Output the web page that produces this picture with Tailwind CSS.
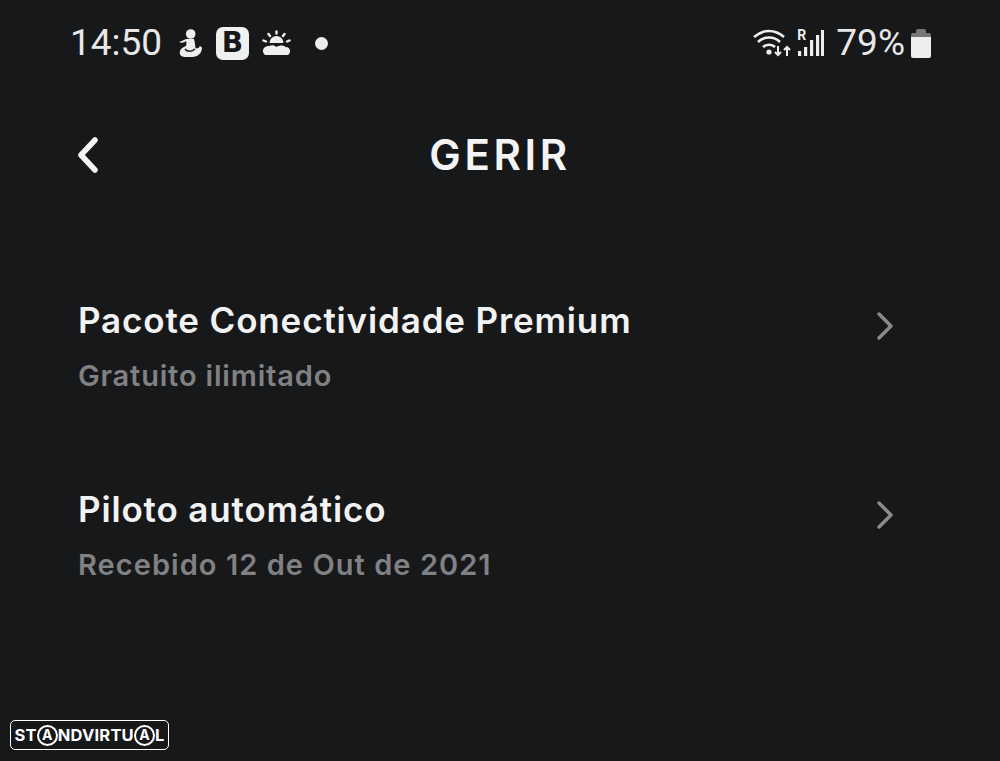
<!DOCTYPE html>
<html><head><meta charset="utf-8"><script src="https://cdn.jsdelivr.net/npm/@tailwindcss/browser@4"></script></head>
<body class="m-0">
<div class="relative w-[1000px] h-[761px] overflow-hidden bg-[#17181a] font-['Inter',sans-serif] text-[#f2f2f2]">
  <div class="flex items-center justify-between h-[50px] mt-[18px] pl-[70px] pr-[69px] absolute top-0 left-0 w-full">
    <div class="flex items-center">
      <span class="font-['Roboto',sans-serif] text-[37px] leading-[50px] text-[#e8e8e8] w-[106px]">14:50</span>
      <svg class="w-[26px] h-[30px]" viewBox="0 0 26 30" fill="#eee"><circle cx="14.700" cy="6" r="4.800"/><path d="M10 11H18C19 14 19 17 19.500 20 21 21 23 20 24 18L26 19.500C26 25 22 29 16 29H9C5 29 3 26 4 23 5 20 8 19 10 18 10.500 16 10.500 14 10 13 8 15 5 15 3 14 6 13 8 12 10 11Z"/><path d="M9 21C11 24 16 24 19 21" fill="none" stroke="#17181a" stroke-width="1.500"/></svg>
      <div class="ml-[14px] w-[33px] h-[33px] rounded-[7px] bg-[#f0f0f0] flex items-center justify-center text-[#17181a] text-[28px] font-bold font-['DejaVu_Sans',sans-serif] leading-none">B</div>
      <svg class="ml-[13px] w-[29px] h-[26px]" viewBox="0 0 29 26" fill="none" stroke="#eee" stroke-width="2.400" stroke-linecap="round"><path d="M14.500 1.500v2M6.500 4l1.500 2M22.500 4 21 6M1.500 10.500l2.500 1M27.500 10.500l-2.500 1"/><path d="M7.500 13a7 7 0 0 1 14 0z" fill="#eee" stroke="none"/><path d="M3 25c-4-3-2-9 4-9 3-1 5-1 7.500 1 3-2 7-2 9 0 5 0 6 5 2.500 8z" fill="#eee" stroke="none"/><path d="M4 14.500c4-1 7-1 10.500 1 3-2 7-2 10 0" stroke="#17181a" stroke-width="1.400"/></svg>
      <span class="ml-[24px] w-[13px] h-[13px] rounded-full bg-[#eee]"></span>
    </div>
    <div class="flex items-center">
      <svg class="w-[39px] h-[30px]" viewBox="0 0 39 30" fill="none" stroke="#eee" stroke-width="2.600"><path d="M1 9c9-8 21-8 30 0M5 14c6-6 16-6 22 0M10 19c3-3 9-3 12 0"/><circle cx="16" cy="24" r="2.600" fill="#eee" stroke="none"/><path d="M25 18v9M22 24l3 3 3-3M34 28v-9M31 22l3-3 3 3" stroke-width="2"/></svg>
      <div class="relative ml-[5px] w-[27px] h-[30px]">
        <svg class="w-[27px] h-[30px]" viewBox="0 0 27 30" fill="#eee"><rect x="1" y="23" width="3.200" height="5"/><rect x="7" y="19" width="3.200" height="9"/><rect x="13" y="12" width="3.200" height="16"/><rect x="19" y="7" width="3.200" height="21"/><rect x="24" y="2" width="3" height="26"/></svg>
        <span class="absolute left-0 top-0 font-['Roboto',sans-serif] text-[14px] font-bold leading-[14px] text-[#eee]">R</span>
      </div>
      <span class="ml-[12px] font-['Roboto',sans-serif] text-[37px] leading-[50px] text-[#e8e8e8]">79%</span>
      <div class="ml-[6px] w-[20px] h-[29px] flex flex-col items-center">
        <div class="w-[10px] h-[4px] bg-[#777] rounded-t-[2px]"></div>
        <div class="w-[20px] h-[25px] rounded-[2px] bg-[#eee] border-t-[4px] border-[#777]"></div>
      </div>
    </div>
  </div>

  <div class="absolute top-[130px] left-0 w-full h-[50px] flex items-center justify-center">
    <svg class="absolute left-[77px] top-[7px] w-[22px] h-[36px]" viewBox="0 0 22 36" fill="none" stroke="#f4f4f4" stroke-width="5.500" stroke-linecap="round" stroke-linejoin="round"><path d="M18 3 4 18l14 15"/></svg>
    <span class="text-[42px] font-semibold tracking-[3.600px] leading-[50px] text-[#f4f4f4]">GERIR</span>
  </div>

  <div class="absolute top-[298px] left-[78px] w-[816px] flex flex-col gap-[99px]">
    <div class="flex items-start justify-between h-[90px]">
      <div class="flex flex-col">
        <span class="text-[35px] font-semibold tracking-[0.850px] leading-[45px] text-[#f2f2f2]">Pacote Conectividade Premium</span>
        <span class="mt-[15px] text-[29px] font-semibold tracking-[0.820px] leading-[35px] text-[#808183]">Gratuito ilimitado</span>
      </div>
      <svg class="w-[18px] h-[30px] mt-[13px]" viewBox="0 0 18 30" fill="none" stroke="#8a8a8a" stroke-width="3.500" stroke-linecap="round" stroke-linejoin="round"><path d="M3 3l12 12L3 27"/></svg>
    </div>
    <div class="flex items-start justify-between h-[90px]">
      <div class="flex flex-col">
        <span class="text-[35px] font-semibold tracking-[0.850px] leading-[45px] text-[#f2f2f2]">Piloto automático</span>
        <span class="mt-[15px] text-[29px] font-semibold tracking-[1.050px] leading-[35px] text-[#808183]">Recebido 12 de Out de 2021</span>
      </div>
      <svg class="w-[18px] h-[30px] mt-[13px]" viewBox="0 0 18 30" fill="none" stroke="#8a8a8a" stroke-width="3.500" stroke-linecap="round" stroke-linejoin="round"><path d="M3 3l12 12L3 27"/></svg>
    </div>
  </div>

  <div class="absolute left-[10px] top-[720px] w-[159px] h-[30px] rounded-[5px] border border-white flex items-center justify-center text-white text-[16.500px] font-bold tracking-[0.200px] leading-none">
    <span>ST</span><span class="inline-flex items-center justify-center w-[21px] h-[21px] rounded-full border-2 border-white text-[14px] tracking-normal">A</span><span>NDVIRTU</span><span class="inline-flex items-center justify-center w-[21px] h-[21px] rounded-full border-2 border-white text-[14px] tracking-normal">A</span><span>L</span>
  </div>
</div>
</body></html>
